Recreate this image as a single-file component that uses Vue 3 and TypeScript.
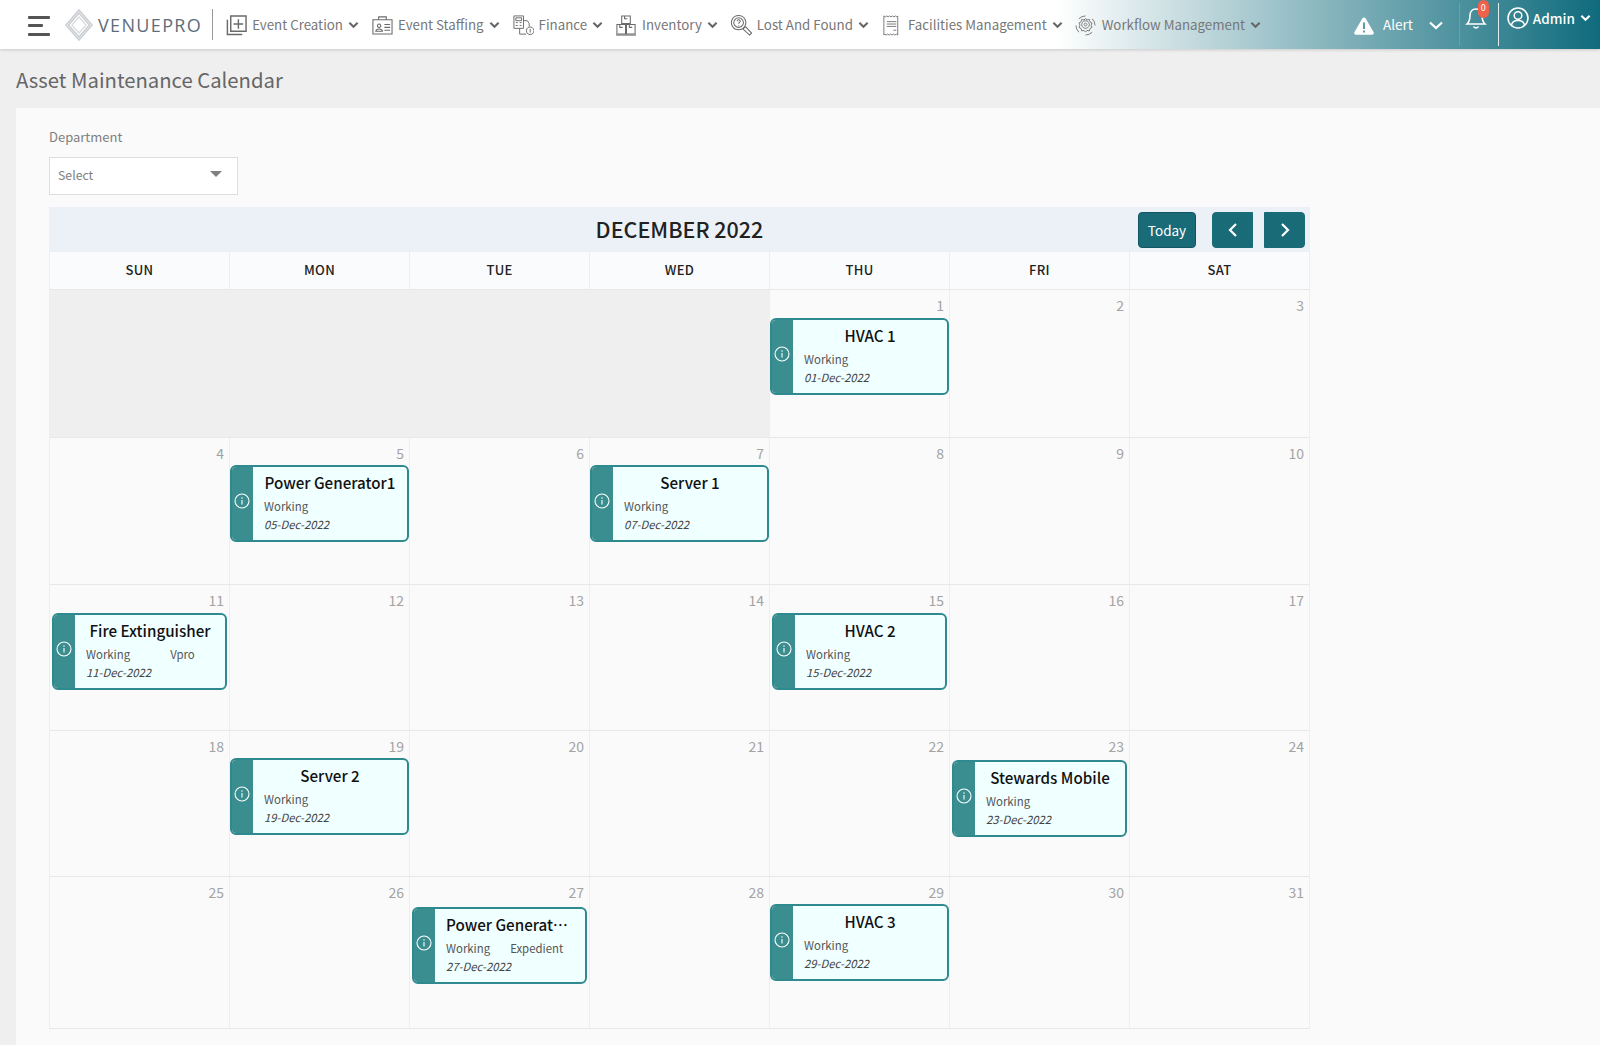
<script setup lang="ts">
// Asset maintenance calendar: top nav plus a fixed December 2022 month grid.
interface NavItem {
  label: string
  stroke: number
  paths: string[]
}

interface MaintEvent {
  day: number
  title: string
  vendor?: string
  vendorGap?: number
  date: string
  top: number
  inset?: boolean
}

const navItems: NavItem[] = [
  {
    label: 'Event Creation',
    stroke: 1.5,
    paths: ['M6 2h16v16H6z', 'M14 5.500v10M9 10.500h10', 'M2.500 6v15.500H18'],
  },
  {
    label: 'Event Staffing',
    stroke: 1.1,
    paths: [
      'M2 6h20v15H2z',
      'M8 6V3h8v3',
      'M8.500 10.500a1.800 1.800 0 1 0 .01 0M5 18c.3-3 6.700-3 7 0H5z',
      'M14 11h6M14 14h6M14 17h6',
    ],
  },
  {
    label: 'Finance',
    stroke: 1,
    paths: [
      'M2 2h10v13H2z',
      'M4 4h6v3H4zM4 9h2M8 9h2M4 12h2M8 12h2',
      'M8 15v6h7M12 7h4l2 3v3',
      'M19 13.500a4 4 0 1 0 .01 0M19 15.500v4',
    ],
  },
  {
    label: 'Inventory',
    stroke: 1.1,
    paths: ['M7 2h9v8H7z', 'M2 11h9v10H2zM12 11h9v10h-9z', 'M10 2v3h3M5 11v3h3M15 11v3h3', 'M1 22h21'],
  },
  {
    label: 'Lost And Found',
    stroke: 1.1,
    paths: [
      'M9 1.500a7.500 7.500 0 1 0 .01 0',
      'M9 4a5 5 0 1 0 .01 0',
      'M7.500 7.500c0-2 3.200-2 3.200 0 0 1.300-1.600 1.300-1.600 2.600M9.100 11.500v.5',
      'M14.500 14.500l2-1 6 6.500-2 2-6.500-6z',
    ],
  },
  {
    label: 'Facilities Management',
    stroke: 0.9,
    paths: [
      'M3 2l1.500 1 1.500-1 1.500 1 1.500-1 1.500 1 1.500-1 1.500 1 1.500-1 1.500 1 1-1v20l-1.500-1-1.500 1-1.500-1-1.500 1-1.500-1-1.500 1-1.500-1-1.500 1-1.500-1-1 1z',
      'M6 8h10M6 10.500h10M6 13h10M13 17h3',
    ],
  },
  {
    label: 'Workflow Management',
    stroke: 0.9,
    paths: [
      'M11 7a4 4 0 1 0 .01 0',
      'M11 9.500a1.500 1.500 0 1 0 .01 0',
      'M11 4.500l1.500 1.800 2.500-.6.600 2.400 2.200 1.300-1 2.300 1 2.300-2.200 1.300-.6 2.400-2.500-.6-1.500 1.800-1.500-1.800-2.500.6-.6-2.400-2.200-1.300 1-2.300-1-2.300 2.200-1.300.6-2.400 2.500.6z',
      'M4 5a10.500 10.500 0 0 1 7-3M18 5a10.500 10.500 0 0 1 3 7M18 19a10.500 10.500 0 0 1-7 3M4 19a10.500 10.500 0 0 1-3-7',
    ],
  },
]

const weekdays = ['SUN', 'MON', 'TUE', 'WED', 'THU', 'FRI', 'SAT']

const events: MaintEvent[] = [
  { day: 1, title: 'HVAC 1', date: '01-Dec-2022', top: 1 },
  { day: 5, title: 'Power Generator1', date: '05-Dec-2022', top: 0 },
  { day: 7, title: 'Server 1', date: '07-Dec-2022', top: 0 },
  { day: 11, title: 'Fire Extinguisher', vendor: 'Vpro', vendorGap: 40, date: '11-Dec-2022', top: 1, inset: true },
  { day: 15, title: 'HVAC 2', date: '15-Dec-2022', top: 1, inset: true },
  { day: 19, title: 'Server 2', date: '19-Dec-2022', top: 0 },
  { day: 23, title: 'Stewards Mobile', date: '23-Dec-2022', top: 2, inset: true },
  { day: 27, title: 'Power Generator2', vendor: 'Expedient', vendorGap: 20, date: '27-Dec-2022', top: 3, inset: true },
  { day: 29, title: 'HVAC 3', date: '29-Dec-2022', top: 0 },
]

// December 2022 starts on a Thursday, so four leading blanks.
const cells: (number | null)[] = [
  null,
  null,
  null,
  null,
  ...Array.from({ length: 31 }, (_, i) => i + 1),
]

const eventOn = (day: number | null) => events.find((e) => e.day === day)
</script>

<template>
  <div class="page">
    <header class="topbar">
      <button class="burger" type="button" aria-label="Menu">
        <span></span><span class="short"></span><span></span>
      </button>
      <svg class="logo-mark" viewBox="0 0 28 32" fill="none" stroke="#c9cdd1" stroke-width="1.500">
        <path d="M14 1 27 16 14 31 1 16z" />
        <path d="M14 4 24.500 16 14 28 3.500 16z" />
        <path d="M14 8 21 16 14 24 7 16z" stroke="#dcdfe2" />
      </svg>
      <span class="logo-text">VENUEPRO</span>
      <i class="logo-rule"></i>

      <nav class="nav">
        <a v-for="item in navItems" :key="item.label" class="nav-item">
          <svg class="nav-icon" viewBox="0 0 23 23" fill="none" stroke="#6a6a6a" :stroke-width="item.stroke">
            <path v-for="(d, i) in item.paths" :key="i" :d="d" />
          </svg>
          <span class="nav-label">{{ item.label }}</span>
          <svg class="chev" viewBox="0 0 12 8" fill="none" stroke="#666" stroke-width="2.200">
            <path d="M1.500 1.500 6 6l4.500-4.500" />
          </svg>
        </a>
      </nav>

      <div class="top-right">
        <svg class="alert-icon" viewBox="0 0 20 18">
          <path d="M10 .5c.8 0 1.300.4 1.700 1.100l7.800 13.500c.7 1.300-.1 2.700-1.500 2.700H2c-1.400 0-2.200-1.400-1.500-2.700L8.300 1.600C8.700.9 9.200.5 10 .5z" fill="#fff" />
          <path d="M10 5.500v6.500M10 13.500v2" stroke="#5f9dab" stroke-width="2" />
        </svg>
        <span class="alert-text">Alert</span>
        <svg class="alert-chev" viewBox="0 0 14 9" fill="none" stroke="#fff" stroke-width="2.200">
          <path d="M1 1.500 7 7l6-5.500" />
        </svg>
        <i class="rule faint"></i>
        <div class="bell">
          <svg viewBox="0 0 22 24" fill="none" stroke="#fff" stroke-width="1.600">
            <path d="M11 3c-4 0-6 3-6 6.500 0 5-1.500 7-3 8.500h18c-1.500-1.500-3-3.500-3-8.500C17 6 15 3 11 3z" />
            <path d="M8.500 20.500c.8 1.800 4.200 1.800 5 0" />
          </svg>
          <b class="badge">0</b>
        </div>
        <i class="rule"></i>
        <div class="admin">
          <svg class="user" viewBox="0 0 22 22" fill="none" stroke="#fff" stroke-width="1.500">
            <circle cx="11" cy="11" r="10" />
            <circle cx="11" cy="8.500" r="3.800" />
            <path d="M4.500 18c1-6 12-6 13 0" />
          </svg>
          <span>Admin</span>
          <svg class="admin-chev" viewBox="0 0 12 8" fill="none" stroke="#fff" stroke-width="2.200">
            <path d="M1.500 1.500 6 6l4.500-4.500" />
          </svg>
        </div>
      </div>
    </header>

    <h1 class="page-title">Asset Maintenance Calendar</h1>

    <main class="panel">
      <label class="field-label">Department</label>
      <div class="select">
        <span>Select</span>
        <i class="caret"></i>
      </div>

      <section class="calendar">
        <div class="cal-head">
          <h2>DECEMBER 2022</h2>
          <div class="cal-actions">
            <button class="btn today" type="button">Today</button>
            <button class="btn arrow prev" type="button" aria-label="Previous">
              <svg viewBox="0 0 10 16" fill="none" stroke="#fff" stroke-width="2.200"><path d="M8 2 2 8l6 6" /></svg>
            </button>
            <button class="btn arrow next" type="button" aria-label="Next">
              <svg viewBox="0 0 10 16" fill="none" stroke="#fff" stroke-width="2.200"><path d="M2 2l6 6-6 6" /></svg>
            </button>
          </div>
        </div>

        <div class="weekdays">
          <div v-for="d in weekdays" :key="d" class="weekday">{{ d }}</div>
        </div>

        <div class="month">
          <div v-for="(day, i) in cells" :key="i" class="cell" :class="{ blank: day === null }">
            <template v-if="day !== null">
              <div class="day-num">{{ day }}</div>
              <article
                v-if="eventOn(day)"
                class="event"
                :class="{ inset: eventOn(day)?.inset }"
                :style="{ marginTop: eventOn(day)?.top + 'px' }"
              >
                <div class="strip">
                  <svg viewBox="0 0 16 16" fill="none" stroke="#fff" stroke-width="1.100">
                    <circle cx="8" cy="8" r="7" />
                    <path d="M8 7v4.500M8 4.300v1.400" />
                  </svg>
                </div>
                <div class="event-body">
                  <div class="event-title">{{ eventOn(day)?.title }}</div>
                  <div class="event-meta">
                    <span>Working</span>
                    <span
                      v-if="eventOn(day)?.vendor"
                      :style="{ marginLeft: eventOn(day)?.vendorGap + 'px' }"
                    >{{ eventOn(day)?.vendor }}</span>
                  </div>
                  <div class="event-date">{{ eventOn(day)?.date }}</div>
                </div>
              </article>
            </template>
          </div>
        </div>
      </section>
    </main>
  </div>
</template>

<style>
html,
body {
  margin: 0;
  background: #efefef;
}
</style>

<style scoped>
.page {
  height: 1045px;
  overflow: hidden;
  display: flex;
  flex-direction: column;
  font-family: "Noto Sans CJK SC", "Noto Sans", sans-serif;
  color: #333;
  background: #efefef;
}

/* top bar */
.topbar {
  flex: none;
  height: 49px;
  display: flex;
  align-items: center;
  padding-left: 28px;
  background: linear-gradient(to right, #fff 66%, #0f6b7c 100%);
  box-shadow: 0 1px 3px rgba(0, 0, 0, 0.16);
  position: relative;
}
.burger {
  width: 22px;
  height: 20px;
  padding: 0;
  border: 0;
  background: none;
  display: flex;
  flex-direction: column;
  justify-content: space-between;
  margin-top: 2px;
}
.burger span {
  display: block;
  height: 3px;
  background: #555;
  border-radius: 1px;
}
.burger .short {
  width: 15px;
}
.logo-mark {
  width: 28px;
  height: 32px;
  margin-left: 15px;
}
.logo-text {
  margin-left: 5px;
  font-family: "Open Sans", sans-serif;
  font-size: 18px;
  letter-spacing: 1.350px;
  color: #5d6d7a;
}
.logo-rule {
  width: 1px;
  height: 31px;
  margin-left: 10px;
  background: #999;
}
.nav {
  display: flex;
  align-items: center;
  margin-left: 12px;
  gap: 12px;
}
.nav-item {
  display: flex;
  align-items: center;
  gap: 4px;
  font-size: 13.300px;
  color: #777;
  white-space: nowrap;
}
.nav-label {
  margin: 0 0 1px 1px;
}
.nav-icon {
  width: 22px;
  height: 22px;
}
.chev,
.admin-chev {
  width: 11px;
  height: 8px;
  margin-left: 1px;
}
.top-right {
  position: absolute;
  right: 0;
  top: 0;
  height: 49px;
  width: 246px;
  display: flex;
  align-items: center;
}
.alert-icon {
  width: 20px;
  height: 18px;
  margin-top: 3px;
}
.alert-text {
  margin: 0 0 2px 9px;
  font-size: 13.500px;
  color: #fff;
}
.alert-chev {
  width: 14px;
  height: 9px;
  margin-left: 16px;
  margin-top: 1px;
}
.rule {
  width: 1px;
  height: 43px;
  background: rgba(255, 255, 255, 0.85);
}
.rule.faint {
  margin-left: 16px;
  background: rgba(255, 255, 255, 0.14);
}
.bell {
  position: relative;
  width: 38px;
  height: 49px;
}
.bell svg {
  position: absolute;
  left: 5px;
  top: 6px;
  width: 22px;
  height: 24px;
}
.badge {
  position: absolute;
  left: 18px;
  top: 0;
  width: 11px;
  height: 18px;
  border-radius: 6px;
  background: #f0604a;
  color: #fff;
  font-size: 9px;
  font-weight: 400;
  line-height: 16px;
  text-align: center;
}
.admin {
  display: flex;
  align-items: center;
  align-self: flex-start;
  height: 36px;
  margin-left: 8px;
  gap: 4px;
  color: #fff;
  font-size: 13.500px;
  font-weight: 500;
}
.user {
  width: 22px;
  height: 22px;
}

/* page */
.page-title {
  flex: none;
  margin: 0;
  height: 59px;
  padding-left: 16px;
  font-size: 20.300px;
  font-weight: 400;
  line-height: 60px;
  color: #666;
}
.panel {
  flex: 1;
  margin-left: 16px;
  padding: 19px 0 0 33px;
  background: #fafafa;
}
.field-label {
  display: block;
  height: 30px;
  font-size: 13px;
  line-height: 20px;
  color: #808080;
}
.select {
  box-sizing: border-box;
  width: 189px;
  height: 38px;
  display: flex;
  align-items: center;
  justify-content: space-between;
  padding: 0 15px 2px 8px;
  border: 1px solid #ddd;
  background: #fff;
  font-size: 12.300px;
  color: #808080;
}
.caret {
  border-left: 6px solid transparent;
  border-right: 6px solid transparent;
  border-top: 6px solid #808080;
  margin-bottom: 3px;
}

/* calendar */
.calendar {
  width: 1261px;
  margin-top: 12px;
}
.cal-head {
  height: 45px;
  position: relative;
  display: flex;
  align-items: center;
  justify-content: center;
  background: #ecf1f8;
}
.cal-head h2 {
  margin: 0 0 3px;
  font-size: 21.500px;
  font-weight: 500;
  color: #222;
}
.cal-actions {
  position: absolute;
  right: 5px;
  top: 5px;
  display: flex;
}
.btn {
  height: 36px;
  padding: 0;
  border: 1px solid #1a6b78;
  background: #1a6b78;
  color: #fff;
  font-family: inherit;
  font-size: 13.500px;
  display: flex;
  align-items: center;
  justify-content: center;
}
.today {
  width: 58px;
  padding-bottom: 1px;
  border-color: #125663;
  border-radius: 4px;
}
.arrow {
  width: 41px;
}
.arrow svg {
  width: 10px;
  height: 16px;
}
.prev {
  margin-left: 16px;
  border-radius: 4px 0 0 4px;
}
.next {
  margin-left: 11px;
  border-radius: 0 4px 4px 0;
}
.weekdays,
.month {
  display: grid;
  grid-template-columns: repeat(7, 180px);
  border-left: 1px solid #eee;
  width: 1260px;
}
.weekdays {
  height: 37px;
  background: #fafbfd;
}
.weekday {
  border-right: 1px solid #eee;
  font-size: 13px;
  font-weight: 500;
  line-height: 35px;
  letter-spacing: 0.3px;
  text-align: center;
  color: #222;
}
.month {
  grid-template-rows: 148px 147px 146px 146px 152px;
  border-bottom: 1px solid #e8e8e8;
}
.cell {
  box-sizing: border-box;
  min-width: 0;
  border-top: 1px solid #e8e8e8;
  border-right: 1px solid #eee;
}
.cell.blank {
  background: #efefef;
}
.day-num {
  height: 27px;
  padding-right: 5px;
  font-size: 14px;
  line-height: 31px;
  text-align: right;
  color: #a3a3a3;
}
.event {
  box-sizing: border-box;
  height: 77px;
  display: flex;
  border: 2px solid #2f8a8f;
  border-radius: 6px;
  background: #f0ffff;
  overflow: hidden;
}
.event.inset {
  margin-left: 2px;
  margin-right: 2px;
}
.strip {
  flex: none;
  width: 21px;
  display: flex;
  align-items: center;
  background: #3a8e90;
}
.strip svg {
  width: 16px;
  height: 16px;
  margin: -5px 0 0 2px;
}
.event-body {
  flex: 1;
  min-width: 0;
  padding: 2px 11px 0;
}
.event-title {
  height: 28px;
  overflow: hidden;
  font-size: 15.200px;
  font-weight: 500;
  line-height: 26px;
  text-align: center;
  text-overflow: ellipsis;
  white-space: nowrap;
  color: #111;
}
.event-meta {
  height: 18px;
  display: flex;
  font-size: 11.400px;
  line-height: 18px;
  color: #555;
}
.event-date {
  font-size: 11.300px;
  font-style: italic;
  line-height: 18px;
  color: #444;
}
</style>
